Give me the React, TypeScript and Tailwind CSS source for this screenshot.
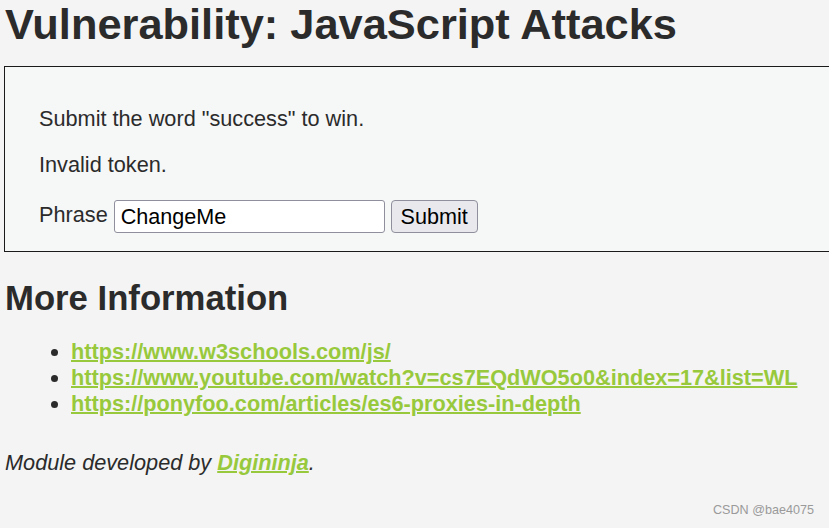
export default function App() {
  return (
    <div className="h-[528px] w-[829px] overflow-hidden bg-[#f4f4f4] text-[#2b2b2b] relative" style={{ fontFamily: '"Liberation Sans", Arial, sans-serif' }}>
      <h1 className="pl-[5px] pt-[1px] text-[43.4px] font-bold leading-[46px]">Vulnerability: JavaScript Attacks</h1>

      <div className="mt-[19px] ml-[4px] w-[840px] h-[186px] border border-[#1a1a1a] bg-[#f6f7f7] pl-[34px] pt-[39px]">
        <p className="text-[21.7px] leading-[25px]">Submit the word "success" to win.</p>
        <p className="mt-[21px] text-[21.7px] leading-[25px]">Invalid token.</p>
        <div className="mt-[23px] flex items-center gap-[6px]">
          <span className="-mt-[3px] text-[21.7px] leading-[26px]">Phrase</span>
          <input
            defaultValue="ChangeMe"
            className="h-[33px] w-[271px] rounded-[3px] border border-[#8f8f9d] bg-white px-[6px] text-[21.6px] text-black outline-none"
          />
          <button className="h-[33px] w-[87px] rounded-[4px] border border-[#8f8f9d] bg-[#e9e9ed] text-[21.6px] text-black">Submit</button>
        </div>
      </div>

      <h2 className="mt-[27px] pl-[5px] text-[34.7px] font-bold leading-[38px]">More Information</h2>
      <ul className="mt-[22px] list-disc pl-[71px] text-[21.7px] font-bold leading-[26px]">
        <li><a className="text-[#98c93c] underline decoration-2" href="#">https://www.w3schools.com/js/</a></li>
        <li><a className="text-[#98c93c] underline decoration-2" href="#">https://www.youtube.com/watch?v=cs7EQdWO5o0&amp;index=17&amp;list=WL</a></li>
        <li><a className="text-[#98c93c] underline decoration-2" href="#">https://ponyfoo.com/articles/es6-proxies-in-depth</a></li>
      </ul>

      <p className="mt-[33px] pl-[5px] text-[21.7px] italic leading-[25px]">
        Module developed by <a className="font-bold text-[#98c93c] underline decoration-2" href="#">Digininja</a>.
      </p>

      <div className="absolute right-[15px] bottom-[8px] text-[12.6px] text-[#9a9a9a]">CSDN @bae4075</div>
    </div>
  );
}
